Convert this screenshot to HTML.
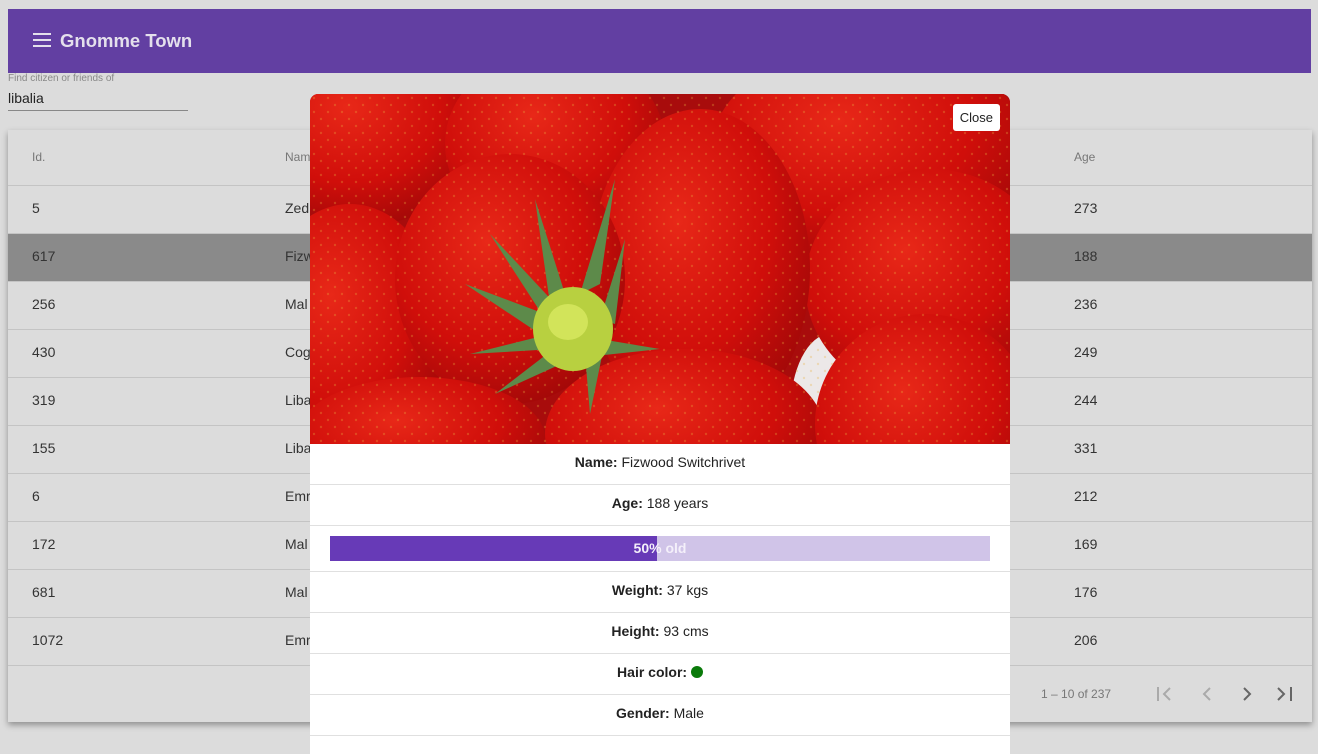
<!DOCTYPE html>
<html><head><meta charset="utf-8">
<style>
*{box-sizing:border-box;margin:0;padding:0}
body{width:1318px;height:742px;overflow:hidden;background:#dcdcdc;font-family:"Liberation Sans",sans-serif;position:relative}
.hdr{position:absolute;left:8px;top:9px;width:1303px;height:64px;background:#623fa2;color:#e4e0ec}
.hdr .t{position:absolute;left:52px;top:21px;font-size:18.5px;font-weight:bold}
.ham{position:absolute;left:25px;top:24px;width:18px}
.ham i{display:block;height:2px;background:#e4e0ec;margin-bottom:4px}
.lbl{position:absolute;left:8px;top:73px;font-size:10px;color:#888}
.inp{position:absolute;left:8px;top:90px;font-size:14px;color:#222;width:180px;border-bottom:1px solid #888;height:21px}
.tbl{position:absolute;left:8px;top:130px;width:1304px;height:592px;background:#dcdcdc;box-shadow:0 3px 6px rgba(0,0,0,.35)}
.row{position:absolute;left:0;width:1304px;height:48px;border-bottom:1px solid #c4c4c4;font-size:14px;color:#333}
.row span{position:absolute;top:14px}
.th{height:56px;font-size:12px;color:#777}
.th span{top:20px}
.foot{position:absolute;left:0;top:536px;width:1304px;height:56px;font-size:12px;color:#777}
.modal{position:absolute;left:310px;top:94px;width:700px;height:660px;background:#fff;border-radius:8px 8px 0 0;overflow:hidden}
.close{position:absolute;right:10px;top:10px;background:#fff;border-radius:3px;font-size:13px;padding:6px 7px;color:#222}
.mr{height:41px;border-bottom:1px solid #e0e0e0;text-align:center;font-size:14px;color:#222;line-height:37px}
.mr b{font-weight:bold}
</style></head><body>
<div class="hdr"><div class="ham"><i></i><i></i><i></i></div><div class="t">Gnomme Town</div></div>
<div class="lbl">Find citizen or friends of</div>
<div class="inp">libalia</div>
<div class="tbl">
<div class="row th" style="top:0"><span style="left:24px">Id.</span><span style="left:277px">Name</span><span style="left:1066px">Age</span></div>
<div class="row" style="top:56px"><span style="left:24px">5</span><span style="left:277px">Zed</span><span style="left:1066px">273</span></div>
<div class="row" style="top:104px;background:#8a8a8a"><span style="left:24px">617</span><span style="left:277px">Fizw</span><span style="left:1066px">188</span></div>
<div class="row" style="top:152px"><span style="left:24px">256</span><span style="left:277px">Mal</span><span style="left:1066px">236</span></div>
<div class="row" style="top:200px"><span style="left:24px">430</span><span style="left:277px">Cog</span><span style="left:1066px">249</span></div>
<div class="row" style="top:248px"><span style="left:24px">319</span><span style="left:277px">Liba</span><span style="left:1066px">244</span></div>
<div class="row" style="top:296px"><span style="left:24px">155</span><span style="left:277px">Liba</span><span style="left:1066px">331</span></div>
<div class="row" style="top:344px"><span style="left:24px">6</span><span style="left:277px">Emr</span><span style="left:1066px">212</span></div>
<div class="row" style="top:392px"><span style="left:24px">172</span><span style="left:277px">Mal</span><span style="left:1066px">169</span></div>
<div class="row" style="top:440px"><span style="left:24px">681</span><span style="left:277px">Mal</span><span style="left:1066px">176</span></div>
<div class="row" style="top:488px"><span style="left:24px">1072</span><span style="left:277px">Emr</span><span style="left:1066px">206</span></div>
<div class="foot"><span style="position:absolute;left:1033px;top:21px">1 – 10 of 237</span>
<svg style="position:absolute;left:1140px;top:16px" width="160" height="24" viewBox="0 0 160 24" fill="none" stroke-width="2">
<path d="M10 5v14M22 6l-6 6 6 6" stroke="#aaa"/>
<path d="M62 6l-6 6 6 6" stroke="#aaa"/>
<path d="M96 6l6 6-6 6" stroke="#666"/>
<path d="M130 6l6 6-6 6M143 5v14" stroke="#666"/>
</svg></div>
</div>
<div class="modal">
<svg width="700" height="350" viewBox="0 0 700 350" style="display:block">
<defs>
<radialGradient id="r" cx="40%" cy="35%" r="70%"><stop offset="0" stop-color="#e82818"/><stop offset=".6" stop-color="#d00e0a"/><stop offset="1" stop-color="#a00808"/></radialGradient>
<pattern id="s" width="14" height="14" patternUnits="userSpaceOnUse"><circle cx="4" cy="4" r="1.2" fill="#e8b040" opacity=".6"/><circle cx="11" cy="11" r="1.2" fill="#e8b040" opacity=".6"/></pattern>
</defs>
<rect width="700" height="350" fill="#a80c0c"/>
<ellipse cx="520" cy="320" rx="40" ry="80" fill="#ece8e8"/>
<ellipse cx="690" cy="180" rx="20" ry="60" fill="#ece8e8"/>
<g fill="url(#r)">
<ellipse cx="60" cy="40" rx="110" ry="90"/>
<ellipse cx="560" cy="60" rx="160" ry="110"/>
<ellipse cx="245" cy="50" rx="110" ry="95"/>
<ellipse cx="40" cy="240" rx="95" ry="130"/>
<ellipse cx="620" cy="190" rx="125" ry="115"/>
<ellipse cx="390" cy="175" rx="110" ry="160"/>
<ellipse cx="200" cy="185" rx="115" ry="125"/>
<ellipse cx="110" cy="345" rx="125" ry="62"/>
<ellipse cx="375" cy="340" rx="140" ry="85"/>
<ellipse cx="615" cy="330" rx="110" ry="110"/>
</g>
<rect width="700" height="350" fill="url(#s)" opacity=".5"/>
<g fill="#5d8a4a">
<path d="M225 105L255 200L240 210Z"/><path d="M305 85L290 190L270 200Z"/><path d="M180 140L250 215L235 225Z"/>
<path d="M155 190L235 220L230 240Z"/><path d="M160 260L240 240L245 255Z"/><path d="M185 300L250 250L262 265Z"/>
<path d="M280 320L275 260L292 262Z"/><path d="M350 255L290 245L285 262Z"/><path d="M315 145L290 225L305 230Z"/>
</g>
<ellipse cx="263" cy="235" rx="40" ry="42" fill="#b8d040"/>
<ellipse cx="258" cy="228" rx="20" ry="18" fill="#d2e45a"/>
</svg>
<div class="close">Close</div>
<div class="mr"><b>Name:</b> Fizwood Switchrivet</div>
<div class="mr"><b>Age:</b> 188 years</div>
<div class="mr" style="height:46px;position:relative"><div style="position:absolute;left:20px;top:10px;width:660px;height:25px;background:#d0c4e8"><div style="width:327px;height:25px;background:#673ab7"></div><div style="position:absolute;left:0;top:0;width:660px;line-height:25px;color:#f4f0fa;font-weight:bold;font-size:14px">50% old</div></div></div>
<div class="mr"><b>Weight:</b> 37 kgs</div>
<div class="mr"><b>Height:</b> 93 cms</div>
<div class="mr"><b>Hair color:</b> <span style="display:inline-block;width:12px;height:12px;border-radius:50%;background:#0a7a0a;vertical-align:-1px"></span></div>
<div class="mr"><b>Gender:</b> Male</div>
</div>
</body></html>
